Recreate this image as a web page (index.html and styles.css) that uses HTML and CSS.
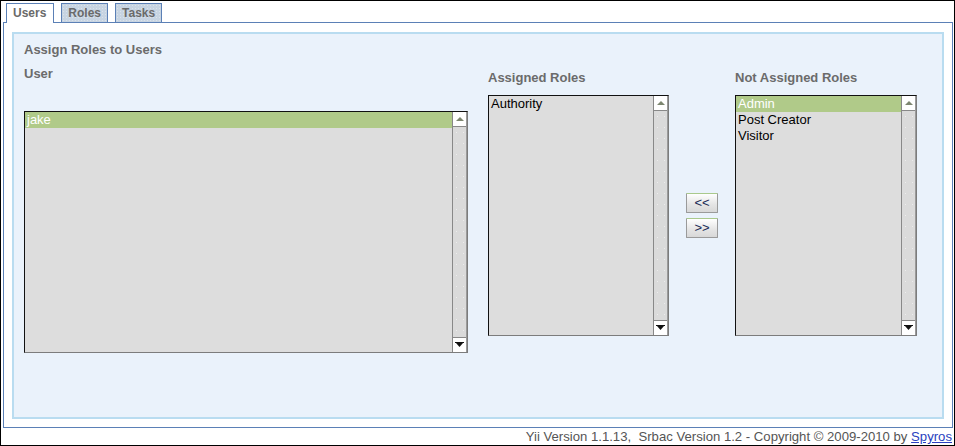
FILE: index.html
```html
<!DOCTYPE html>
<html>
<head>
<meta charset="utf-8">
<link rel="stylesheet" href="styles.css">
</head>
<body>
<div class="window">
  <div class="tabs">
    <span class="tab active">Users</span>
    <span class="tab">Roles</span>
    <span class="tab">Tasks</span>
  </div>
  <div class="panel">
    <div class="box">
      <h3 class="title">Assign Roles to Users</h3>
      <div class="row">
        <div class="col col-user">
          <div class="label">User</div>
          <div class="listbox lb-user">
            <div class="items"><div class="item sel">jake</div></div>
            <div class="sb">
              <div class="sb-btn sb-up"><svg width="8" height="5" viewBox="0 0 8 5"><polygon points="0,4 8,4 4,0" fill="#7d8670"/></svg></div>
              <div class="sb-track"></div>
              <div class="sb-btn sb-down"><svg width="9" height="6" viewBox="0 0 9 6"><rect x="0" y="0" width="9" height="1" fill="#111"/><polygon points="1,1 8,1 4.5,5" fill="#111"/></svg></div>
            </div>
          </div>
        </div>
        <div class="col col-assigned">
          <div class="label">Assigned Roles</div>
          <div class="listbox lb-role">
            <div class="items"><div class="item">Authority</div></div>
            <div class="sb">
              <div class="sb-btn sb-up"><svg width="8" height="5" viewBox="0 0 8 5"><polygon points="0,4 8,4 4,0" fill="#7d8670"/></svg></div>
              <div class="sb-track"></div>
              <div class="sb-btn sb-down"><svg width="9" height="6" viewBox="0 0 9 6"><rect x="0" y="0" width="9" height="1" fill="#111"/><polygon points="1,1 8,1 4.5,5" fill="#111"/></svg></div>
            </div>
          </div>
        </div>
        <div class="col col-btns">
          <button class="mv">&lt;&lt;</button>
          <button class="mv">&gt;&gt;</button>
        </div>
        <div class="col col-not">
          <div class="label">Not Assigned Roles</div>
          <div class="listbox lb-role">
            <div class="items">
              <div class="item sel">Admin</div>
              <div class="item">Post Creator</div>
              <div class="item">Visitor</div>
            </div>
            <div class="sb">
              <div class="sb-btn sb-up"><svg width="8" height="5" viewBox="0 0 8 5"><polygon points="0,4 8,4 4,0" fill="#7d8670"/></svg></div>
              <div class="sb-track"></div>
              <div class="sb-btn sb-down"><svg width="9" height="6" viewBox="0 0 9 6"><rect x="0" y="0" width="9" height="1" fill="#111"/><polygon points="1,1 8,1 4.5,5" fill="#111"/></svg></div>
            </div>
          </div>
        </div>
      </div>
    </div>
  </div>
  <div class="footer">Yii Version 1.1.13,&nbsp; Srbac Version 1.2 - Copyright © 2009-2010 by <a href="#" class="link">Spyros</a></div>
</div>
</body>
</html>
```
FILE: styles.css
```css
html, body {
  margin: 0;
  padding: 0;
  background: #fff;
}
.window {
  width: 955px;
  height: 446px;
  box-sizing: border-box;
  border: 1px solid #000;
  padding: 2px 1px 0 2px;
  display: flex;
  flex-direction: column;
  font-family: "Liberation Sans", Arial, sans-serif;
}
.tabs {
  display: flex;
  gap: 7px;
  padding-left: 3px;
  height: 19px;
  align-items: flex-start;
}
.tab {
  box-sizing: border-box;
  height: 19px;
  border: 1px solid #5b80b6;
  border-bottom: none;
  padding: 0 6px;
  line-height: 18px;
  font-size: 12px;
  font-weight: bold;
  color: #6a6a6a;
  background-color: #c7d4e2;
  background-image: radial-gradient(circle, #dae2eb 0.5px, transparent 0.9px);
  background-size: 3px 3px;
}
.tab.active {
  height: 20px;
  background: #fff;
  margin-bottom: -1px;
  position: relative;
  z-index: 1;
  padding: 0 7px 0 6px;
}
.panel {
  width: 950px;
  height: 406px;
  box-sizing: border-box;
  border: 1px solid #5b80b6;
  padding: 9px 8px 8px 8px;
  background: #fff;
}
.box {
  box-sizing: border-box;
  height: 387px;
  border: 2px solid #b9dcf0;
  background: #eaf2fb;
  padding: 8px 10px 0 10px;
}
.title {
  margin: 0;
  font-size: 13px;
  line-height: 15px;
  font-weight: bold;
  color: #6b6b6b;
}
.row {
  display: flex;
  align-items: flex-start;
}
.label {
  font-size: 13px;
  line-height: 15px;
  font-weight: bold;
  color: #6b6b6b;
}
.col-user {
  width: 444px;
}
.col-user .label {
  margin-top: 9px;
}
.col-user .listbox {
  margin-top: 30px;
  height: 242px;
}
.col-assigned {
  width: 181px;
  margin-left: 20px;
}
.col-not {
  width: 182px;
  margin-left: 17px;
}
.col-assigned .label,
.col-not .label {
  margin-top: 13px;
}
.lb-role {
  margin-top: 10px;
  height: 241px;
}
.col-btns {
  width: 32px;
  margin-left: 17px;
  margin-top: 136px;
  display: flex;
  flex-direction: column;
  gap: 5px;
}
.mv {
  width: 32px;
  height: 20px;
  margin: 0;
  padding: 0;
  box-sizing: border-box;
  border: 1px solid #9a9a9a;
  border-top-color: #a9c98c;
  border-radius: 1px;
  background: linear-gradient(#ffffff, #e4e4e4 60%, #d8d8d8);
  font-family: "Liberation Sans", Arial, sans-serif;
  font-size: 13px;
  line-height: 18px;
  color: #1a2a55;
}
.listbox {
  box-sizing: border-box;
  display: flex;
  border: 1px solid;
  border-color: #111 #7c7c7c #7c7c7c #111;
  background: #dddddd;
}
.items {
  flex: 1;
  min-width: 0;
}
.item {
  height: 16px;
  line-height: 16px;
  font-size: 13px;
  padding-left: 2px;
  color: #000;
  white-space: nowrap;
}
.item.sel {
  background: #b0ca89;
  color: #fff;
}
.sb {
  width: 15px;
  box-sizing: border-box;
  border-left: 1px solid #888;
  border-right: 1px solid #9a9a9a;
  display: flex;
  flex-direction: column;
}
.sb-btn {
  height: 14px;
  background: #fff;
  display: flex;
  align-items: center;
  justify-content: center;
}
.sb-up {
  border-bottom: 1px solid #888;
}
.sb-down {
  border-top: 1px solid #888;
}
.sb-track {
  flex: 1;
  background-color: #dadada;
  background-image: radial-gradient(circle, #ececec 0.5px, transparent 0.9px);
  background-size: 7px 11px;
}
.footer {
  flex: 1;
  text-align: right;
  font-size: 13.15px;
  line-height: 16px;
  padding-top: 1px;
  padding-right: 1px;
  color: #555;
}
.link {
  color: #2a3fc0;
  text-decoration: underline;
}
```
